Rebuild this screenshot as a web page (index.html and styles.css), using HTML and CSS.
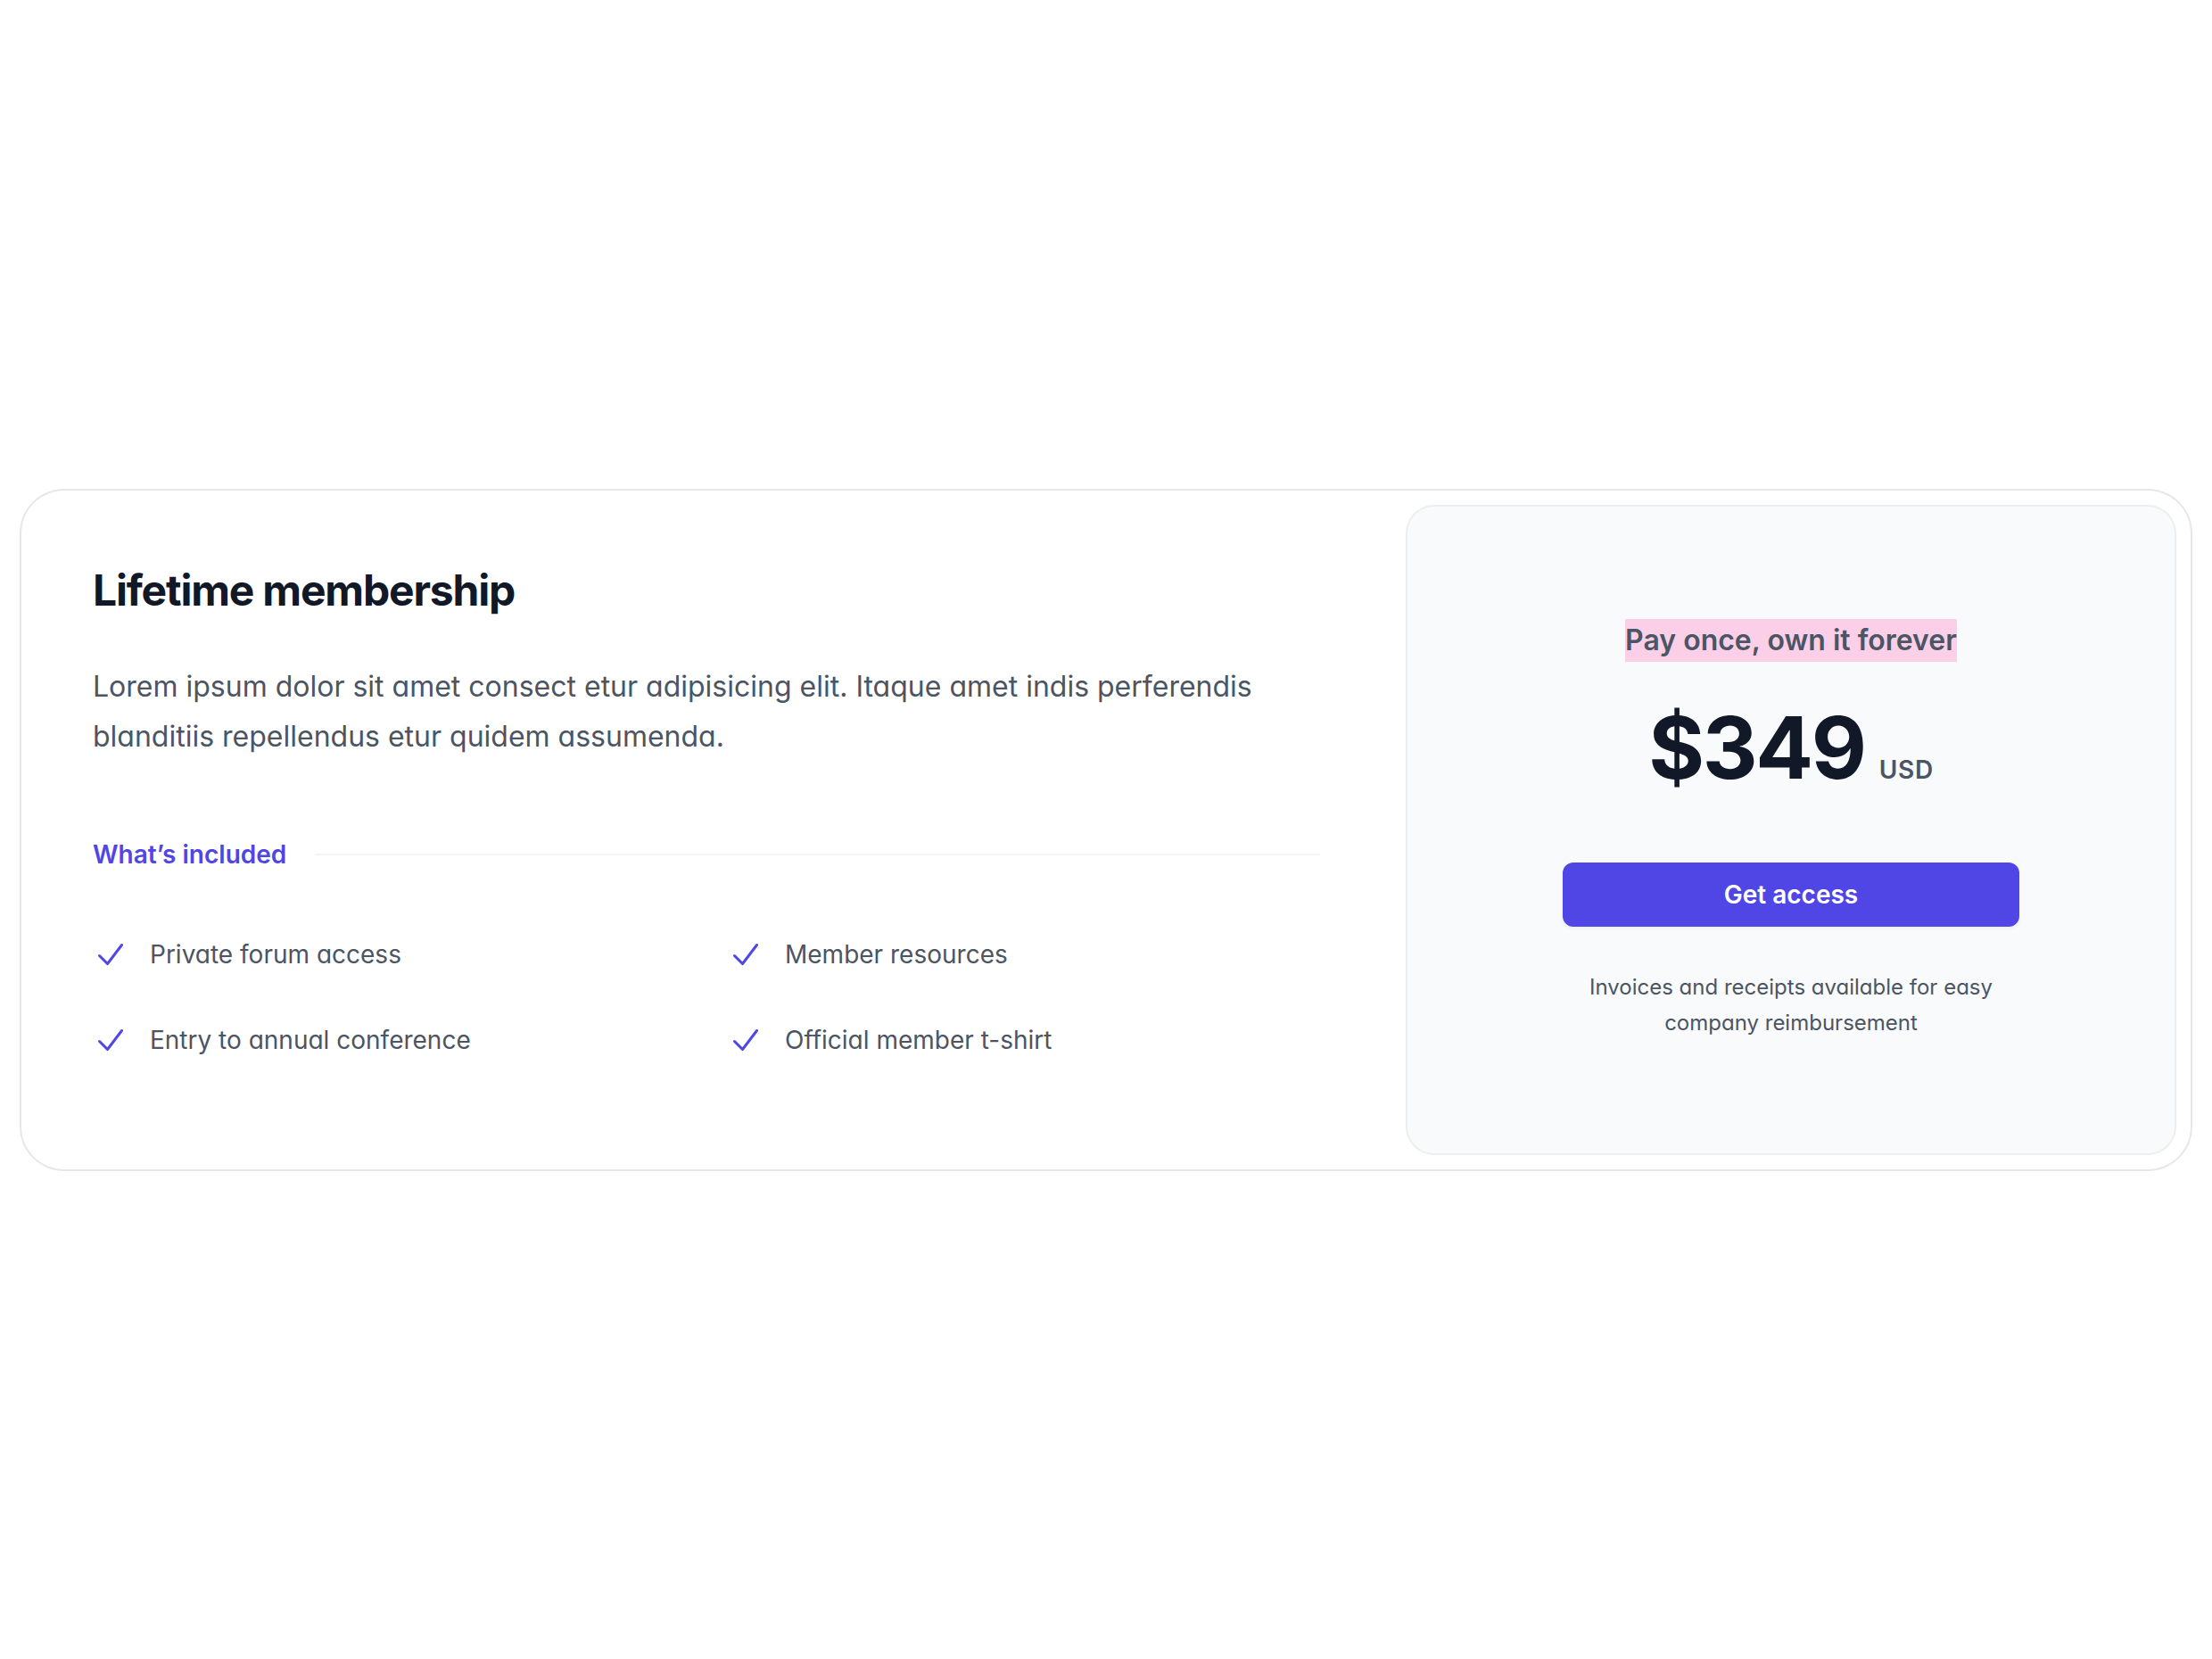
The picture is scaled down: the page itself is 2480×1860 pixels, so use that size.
FILE: index.html
```html
<!DOCTYPE html>
<html lang="en">
<head>
<meta charset="utf-8">
<title>Lifetime membership</title>
<link rel="stylesheet" href="styles.css">
</head>
<body>
<section class="page">
  <div class="card">
    <div class="details">
      <h3 class="title">Lifetime membership</h3>
      <p class="lead">Lorem ipsum dolor sit amet consect etur adipisicing elit. Itaque amet indis perferendis blanditiis repellendus etur quidem assumenda.</p>
      <div class="included">
        <h4 class="included-label">What’s included</h4>
        <div class="included-rule"></div>
      </div>
      <ul class="features">
        <li class="feature">
          <svg class="check" viewBox="0 0 20 20" fill="currentColor" aria-hidden="true"><path fill-rule="evenodd" d="M16.704 4.153a.75.75 0 01.143 1.052l-8 10.5a.75.75 0 01-1.127.075l-4.5-4.5a.75.75 0 011.06-1.06l3.894 3.893 7.48-9.817a.75.75 0 011.05-.143z" clip-rule="evenodd"/></svg>
          Private forum access
        </li>
        <li class="feature">
          <svg class="check" viewBox="0 0 20 20" fill="currentColor" aria-hidden="true"><path fill-rule="evenodd" d="M16.704 4.153a.75.75 0 01.143 1.052l-8 10.5a.75.75 0 01-1.127.075l-4.5-4.5a.75.75 0 011.06-1.06l3.894 3.893 7.48-9.817a.75.75 0 011.05-.143z" clip-rule="evenodd"/></svg>
          Member resources
        </li>
        <li class="feature">
          <svg class="check" viewBox="0 0 20 20" fill="currentColor" aria-hidden="true"><path fill-rule="evenodd" d="M16.704 4.153a.75.75 0 01.143 1.052l-8 10.5a.75.75 0 01-1.127.075l-4.5-4.5a.75.75 0 011.06-1.06l3.894 3.893 7.48-9.817a.75.75 0 011.05-.143z" clip-rule="evenodd"/></svg>
          Entry to annual conference
        </li>
        <li class="feature">
          <svg class="check" viewBox="0 0 20 20" fill="currentColor" aria-hidden="true"><path fill-rule="evenodd" d="M16.704 4.153a.75.75 0 01.143 1.052l-8 10.5a.75.75 0 01-1.127.075l-4.5-4.5a.75.75 0 011.06-1.06l3.894 3.893 7.48-9.817a.75.75 0 011.05-.143z" clip-rule="evenodd"/></svg>
          Official member t-shirt
        </li>
      </ul>
    </div>
    <div class="aside">
      <div class="panel">
        <div class="panel-inner">
          <p class="tagline"><span class="highlight">Pay once, own it forever</span></p>
          <p class="price">
            <span class="amount">$349</span>
            <span class="currency">USD</span>
          </p>
          <a href="#" class="cta">Get access</a>
          <p class="note">Invoices and receipts available for easy company reimbursement</p>
        </div>
      </div>
    </div>
  </div>
</section>
</body>
</html>
```

FILE: styles.css
```css
* { box-sizing: border-box; }

html, body {
  margin: 0;
  padding: 0;
  background: #ffffff;
}

body {
  font-family: Inter, "Noto Sans", "Liberation Sans", sans-serif;
  color: #111827;
  -webkit-font-smoothing: antialiased;
}

.page {
  min-height: 100vh;
  display: flex;
  align-items: center;
  padding: 0 24px;
}

.card {
  width: 100%;
  display: flex;
  border-radius: 48px;
  box-shadow: 0 0 0 2px #e5e7eb;
  background: #ffffff;
}

.details {
  flex: 1 1 auto;
  padding: 80px;
}

.title {
  margin: 0;
  font-size: 48px;
  line-height: 64px;
  font-weight: 700;
  letter-spacing: -0.025em;
  color: #111827;
}

.lead {
  margin: 48px 0 0;
  font-size: 32px;
  line-height: 56px;
  color: #4b5563;
  font-feature-settings: "cv11";
}

.included {
  margin-top: 80px;
  display: flex;
  align-items: center;
  gap: 32px;
}

.included-label {
  flex: none;
  margin: 0;
  font-size: 28px;
  line-height: 48px;
  font-weight: 600;
  color: #4f46e5;
}

.included-rule {
  flex: 1 1 auto;
  height: 2px;
  background: #f3f4f6;
}

.features {
  list-style: none;
  margin: 64px 0 0;
  padding: 0;
  display: grid;
  grid-template-columns: 1fr 1fr;
  gap: 48px;
  font-size: 28px;
  line-height: 48px;
  color: #4b5563;
  font-feature-settings: "cv11";
}

.feature {
  display: flex;
  gap: 24px;
}

.check {
  flex: none;
  width: 40px;
  height: 48px;
  color: #4f46e5;
}

.aside {
  flex: none;
  width: 896px;
  padding: 16px;
}

.panel {
  height: 100%;
  border-radius: 32px;
  background: #f9fafb;
  box-shadow: inset 0 0 0 2px rgba(17, 24, 39, 0.05);
  text-align: center;
  display: flex;
  flex-direction: column;
  justify-content: center;
  padding: 128px 0;
}

.panel-inner {
  width: 100%;
  max-width: 640px;
  margin: 0 auto;
  padding: 0 64px;
}

.tagline {
  margin: 0;
  font-size: 32px;
  line-height: 48px;
  font-weight: 600;
  color: #4b5563;
}

.highlight {
  display: inline-block;
  background: #fbcfe8;
}

.price {
  margin: 48px 0 0;
  display: flex;
  align-items: baseline;
  justify-content: center;
  gap: 16px;
}

.amount {
  font-size: 96px;
  line-height: 96px;
  font-weight: 700;
  letter-spacing: -0.025em;
  color: #111827;
}

.currency {
  font-size: 28px;
  line-height: 48px;
  font-weight: 600;
  letter-spacing: 0.025em;
  color: #4b5563;
}

.cta {
  display: block;
  margin-top: 80px;
  padding: 16px 24px;
  border-radius: 12px;
  background: #4f46e5;
  color: #ffffff;
  font-size: 28px;
  line-height: 40px;
  font-weight: 600;
  text-decoration: none;
  box-shadow: 0 2px 4px rgba(0, 0, 0, 0.05);
}

.note {
  margin: 48px 0 0;
  font-size: 24px;
  line-height: 40px;
  color: #4b5563;
  font-feature-settings: "cv11";
}
```
